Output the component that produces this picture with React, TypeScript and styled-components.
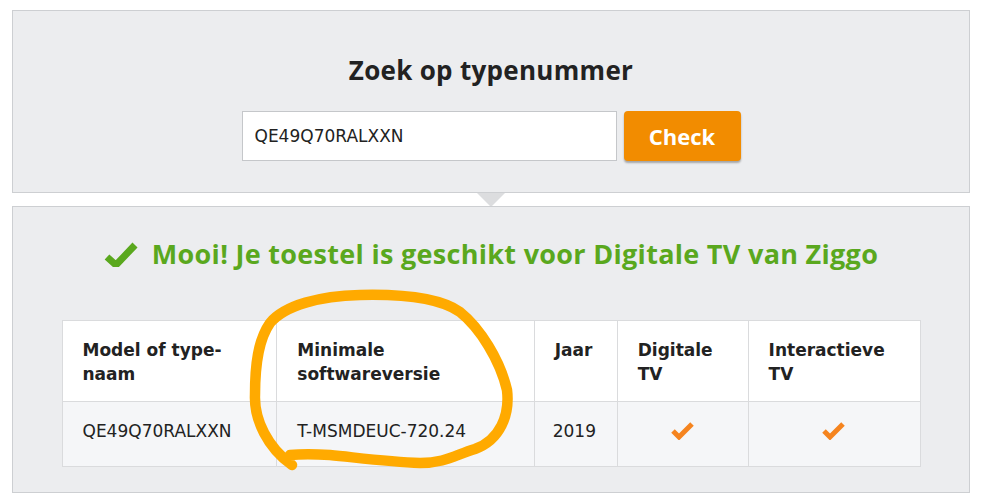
import styled, { createGlobalStyle } from "styled-components";

const GlobalStyle = createGlobalStyle`
  html, body {
    margin: 0;
    padding: 0;
    background: #ffffff;
  }
  body {
    font-family: "DejaVu Sans", Verdana, sans-serif;
    color: #222222;
  }
`;

const Page = styled.div`
  position: relative;
  width: 985px;
  height: 503px;
  padding: 10px 15px 0 12px;
  box-sizing: border-box;
  display: flex;
  flex-direction: column;
  gap: 13px;
`;

const Panel = styled.section<{ $height: number }>`
  position: relative;
  height: ${(p) => p.$height}px;
  box-sizing: border-box;
  background: #ecedef;
  border: 1px solid #cdcfd2;
  display: flex;
  flex-direction: column;
  align-items: center;
`;

const SearchTitle = styled.h2`
  margin: 46px 0 0 0;
  font-family: "Open Sans", Lato, sans-serif;
  font-weight: 700;
  font-size: 26px;
  line-height: 26px;
  letter-spacing: 0.3px;
  color: #222222;
`;

const SearchRow = styled.div`
  margin-top: 28px;
  display: flex;
  gap: 7px;
`;

const Input = styled.input`
  width: 375px;
  height: 50px;
  box-sizing: border-box;
  border: 1px solid #c5c7ca;
  background: #ffffff;
  padding: 0 12px;
  font-family: "DejaVu Sans", Verdana, sans-serif;
  font-size: 17px;
  color: #222222;
  outline: none;
`;

const CheckButton = styled.button`
  width: 117px;
  height: 50px;
  border: none;
  border-radius: 4px;
  background: #f28c00;
  box-shadow: 0 2px 2px rgba(0, 0, 0, 0.3);
  color: #ffffff;
  font-family: "Open Sans", Lato, sans-serif;
  font-weight: 700;
  font-size: 22px;
  cursor: pointer;
`;

const Pointer = styled.div`
  position: absolute;
  left: 50%;
  bottom: -15px;
  transform: translateX(-50%);
  width: 0;
  height: 0;
  border-left: 14px solid transparent;
  border-right: 14px solid transparent;
  border-top: 14px solid #dcdddf;
`;

const Result = styled.div`
  margin-top: 32px;
  display: flex;
  align-items: center;
  gap: 14px;
`;

const ResultText = styled.h3`
  margin: 0;
  font-family: "Open Sans", Lato, sans-serif;
  font-weight: 700;
  font-size: 27px;
  line-height: 30px;
  letter-spacing: 0.3px;
  color: #5aa81e;
`;

const Table = styled.table`
  margin-top: 51px;
  width: 859px;
  border-collapse: collapse;
  font-size: 17px;
  line-height: 24px;
  color: #222222;
`;

const HeadCell = styled.th<{ $width: number }>`
  width: ${(p) => p.$width}px;
  box-sizing: border-box;
  height: 81px;
  padding: 17px 20px 15px 20px;
  background: #ffffff;
  border: 1px solid #dadbdd;
  text-align: left;
  vertical-align: top;
  font-weight: 700;
`;

const BodyCell = styled.td<{ $center?: boolean; $padLeft?: number }>`
  height: 65px;
  box-sizing: border-box;
  padding: 0 20px 7px ${(p) => p.$padLeft ?? 20}px;
  background: #f5f6f8;
  border: 1px solid #dadbdd;
  text-align: ${(p) => (p.$center ? "center" : "left")};
  vertical-align: middle;
`;

const Scribble = styled.svg`
  position: absolute;
  left: 0;
  top: 0;
  pointer-events: none;
`;

const CheckMark = styled.svg`
  display: block;
  margin: 0 auto;
`;

const GreenCheck = () => (
  <svg width="34" height="26" viewBox="0 0 34 26">
    <path d="M3 16 L12 24 L31 4" fill="none" stroke="#5aa81e" strokeWidth="7" />
  </svg>
);

const OrangeCheck = () => (
  <CheckMark width="24" height="18" viewBox="0 0 24 18">
    <path d="M2 9 L8 15 L21 2" fill="none" stroke="#f5841f" strokeWidth="5" />
  </CheckMark>
);

const columns = [
  { label: ["Model of type-", "naam"], width: 215 },
  { label: ["Minimale", "softwareversie"], width: 258 },
  { label: ["Jaar"], width: 83 },
  { label: ["Digitale", "TV"], width: 131 },
  { label: ["Interactieve", "TV"], width: 172 },
];

export default function App() {
  return (
    <>
      <GlobalStyle />
      <Page>
        <Panel $height={183}>
          <SearchTitle>Zoek op typenummer</SearchTitle>
          <SearchRow>
            <Input defaultValue="QE49Q70RALXXN" />
            <CheckButton>Check</CheckButton>
          </SearchRow>
          <Pointer />
        </Panel>
        <Panel $height={287}>
          <Result>
            <GreenCheck />
            <ResultText>Mooi! Je toestel is geschikt voor Digitale TV van Ziggo</ResultText>
          </Result>
          <Table>
            <thead>
              <tr>
                {columns.map((c) => (
                  <HeadCell key={c.label[0]} $width={c.width}>
                    {c.label.map((line, i) => (
                      <span key={line}>
                        {i > 0 && <br />}
                        {line}
                      </span>
                    ))}
                  </HeadCell>
                ))}
              </tr>
            </thead>
            <tbody>
              <tr>
                <BodyCell>QE49Q70RALXXN</BodyCell>
                <BodyCell>T-MSMDEUC-720.24</BodyCell>
                <BodyCell $padLeft={18}>2019</BodyCell>
                <BodyCell $center>
                  <OrangeCheck />
                </BodyCell>
                <BodyCell $center>
                  <OrangeCheck />
                </BodyCell>
              </tr>
            </tbody>
          </Table>
        </Panel>
        <Scribble width="985" height="503" viewBox="0 0 985 503">
          <path
            d="M292 465 C268 448, 254 420, 255 395 C255 365, 258 340, 270 323 C285 305, 320 296, 360 295 C400 294, 440 298, 460 312 C480 328, 500 360, 507 390 C510 415, 500 440, 475 449 C455 455, 445 463, 420 463 C390 462, 360 458, 330 455 C315 454, 300 454, 290 455"
            fill="none"
            stroke="#ffaa00"
            strokeWidth="10.5"
            strokeLinecap="round"
            strokeLinejoin="round"
          />
        </Scribble>
      </Page>
    </>
  );
}
